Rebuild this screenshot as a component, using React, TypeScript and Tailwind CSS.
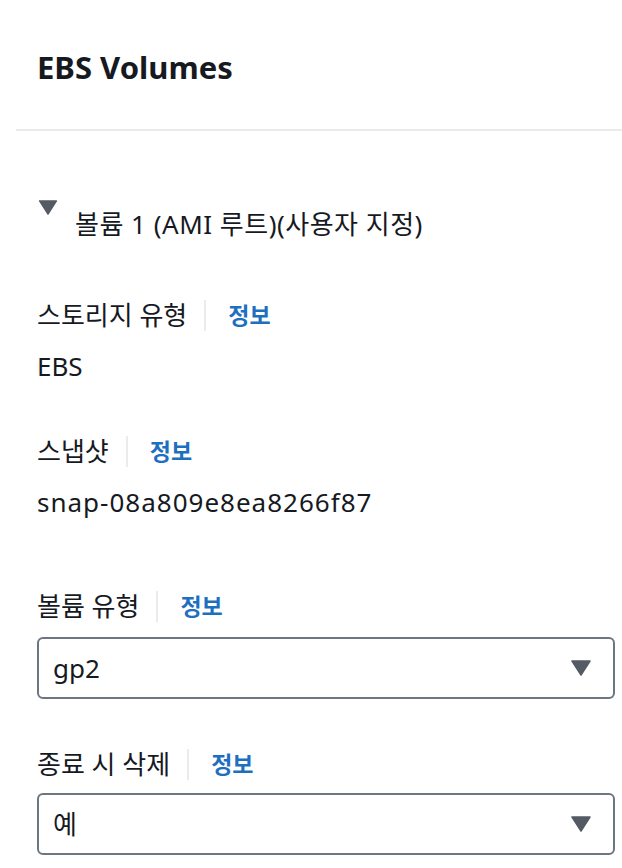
import React from "react";

const font = { fontFamily: '"Noto Sans", "Noto Sans CJK KR", sans-serif' };

function Caret({ className }: { className: string }) {
    return (
        <svg viewBox="0 0 20 16" className={className}>
            <path d="M1 1 L19 1 L10 15 Z" fill="#545b64" stroke="#545b64" strokeWidth="1.5" strokeLinejoin="round" />
        </svg>
    );
}

function Label({ text }: { text: string }) {
    return (
        <div className="flex items-center h-[32px] leading-[32px] text-[26px] text-[#16191f]">
            <span>{text}</span>
            <span className="ml-[17px] mr-[22px] w-[2px] h-[31px] bg-[#e9ebed]" />
            <span className="font-bold text-[#1d6fc0] text-[23px]">정보</span>
        </div>
    );
}

function Select({ value }: { value: string }) {
    return (
        <div className="flex items-center justify-between h-[62px] border-2 border-[#6c7580] rounded-[6px] pl-[14px] pr-[22px] bg-white">
            <span className="text-[26px] text-[#16191f] leading-[32px]">{value}</span>
            <Caret className="w-[20px] h-[16px]" />
        </div>
    );
}

export default function App() {
    return (
        <div className="w-[622px] h-[868px] bg-white overflow-hidden" style={font}>
            <div className="pl-[37px] pt-[47px] h-[129px]">
                <h2 className="text-[31px] font-bold leading-[40px] text-[#16191f]">EBS Volumes</h2>
            </div>
            <div className="ml-[16px] h-[2px] bg-[#e9ebed]" />

            <div className="pl-[37px] pr-[7px]">
                <div className="flex items-start mt-[69px] h-[32px]">
                    <Caret className="w-[20px] h-[15px] ml-[1px]" />
                    <span className="ml-[17px] mt-[8px] text-[26px] leading-[32px] tracking-[0.5px] text-[#16191f]">
                        볼륨 1 (AMI 루트)(사용자 지정)
                    </span>
                </div>

                <div className="mt-[67px]">
                    <Label text="스토리지 유형" />
                </div>
                <div className="mt-[19px] text-[26px] leading-[32px] text-[#16191f]">EBS</div>

                <div className="mt-[53px]">
                    <Label text="스냅샷" />
                </div>
                <div className="mt-[19px] text-[26px] leading-[32px] tracking-[1px] text-[#16191f]">snap-08a809e8ea8266f87</div>

                <div className="mt-[72px]">
                    <Label text="볼륨 유형" />
                </div>
                <div className="mt-[15px]">
                    <Select value="gp2" />
                </div>

                <div className="mt-[49px]">
                    <Label text="종료 시 삭제" />
                </div>
                <div className="mt-[13px]">
                    <Select value="예" />
                </div>
            </div>
        </div>
    );
}
